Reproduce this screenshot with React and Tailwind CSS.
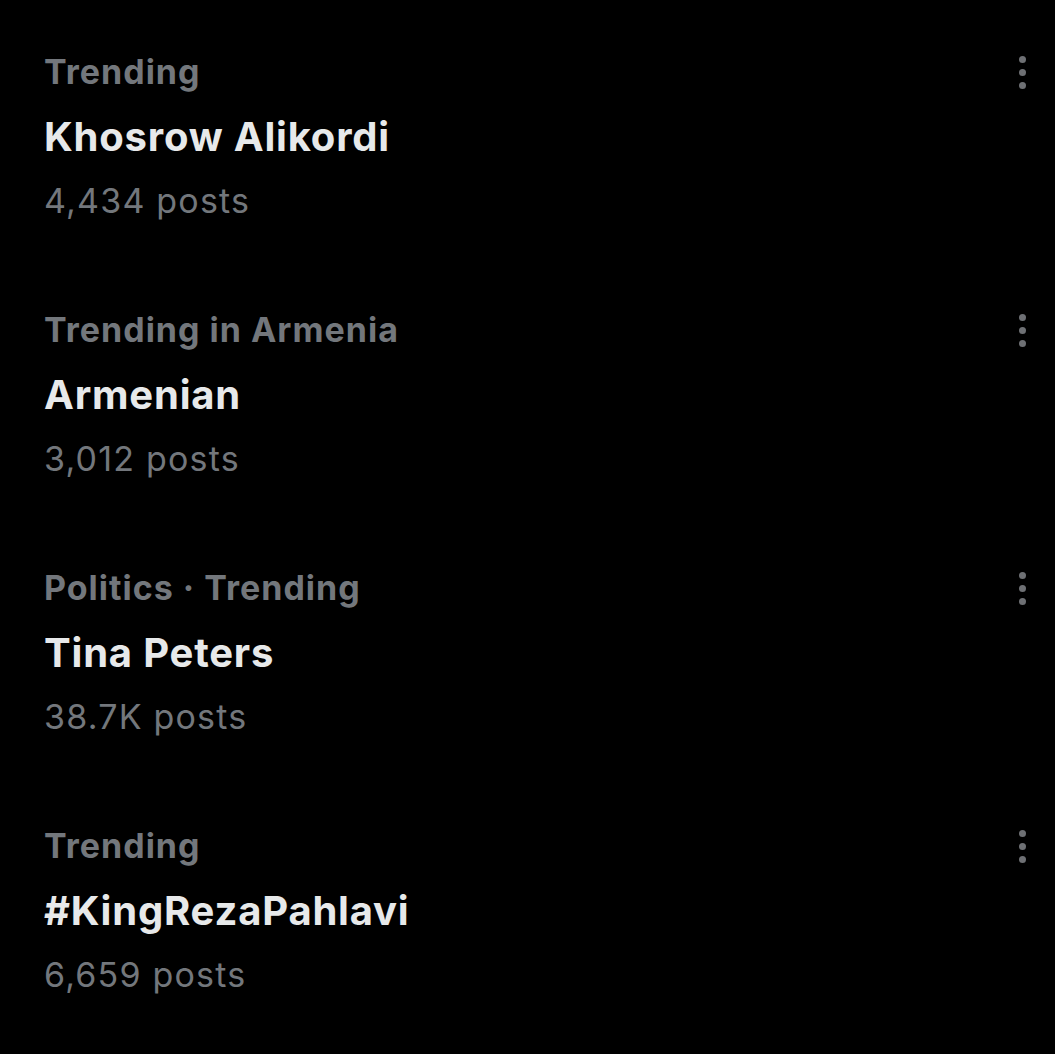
export default function App() {
  const items = [
    { cat: "Trending", title: "Khosrow Alikordi", posts: "4,434 posts" },
    { cat: "Trending in Armenia", title: "Armenian", posts: "3,012 posts" },
    { cat: "Politics · Trending", title: "Tina Peters", posts: "38.7K posts" },
    { cat: "Trending", title: "#KingRezaPahlavi", posts: "6,659 posts" },
  ];
  return (
    <div className="w-[1055px] h-[1054px] bg-black overflow-hidden" style={{ fontFamily: "Inter, 'Noto Sans', sans-serif" }}>
      {items.map((it, i) => (
        <div key={i} className="h-[258px] flex justify-between pl-[44px] pr-[29px] pt-[40px]">
          <div className="flex flex-col">
            <div className="h-[64px] leading-[64px] text-[34px] font-bold text-[#73777c] tracking-[1px]">{it.cat}</div>
            <div className="h-[65px] leading-[65px] text-[40px] font-bold text-[#e7e9ea] tracking-[0.8px]">{it.title}</div>
            <div className="h-[64px] leading-[64px] text-[34px] text-[#73777c] tracking-[1.2px]">{it.posts}</div>
          </div>
          <div className="flex flex-col gap-[6px] pt-[16px]">
            <div className="w-[7px] h-[7px] rounded-full bg-[#6e7074]" />
            <div className="w-[7px] h-[7px] rounded-full bg-[#6e7074]" />
            <div className="w-[7px] h-[7px] rounded-full bg-[#6e7074]" />
          </div>
        </div>
      ))}
    </div>
  );
}
